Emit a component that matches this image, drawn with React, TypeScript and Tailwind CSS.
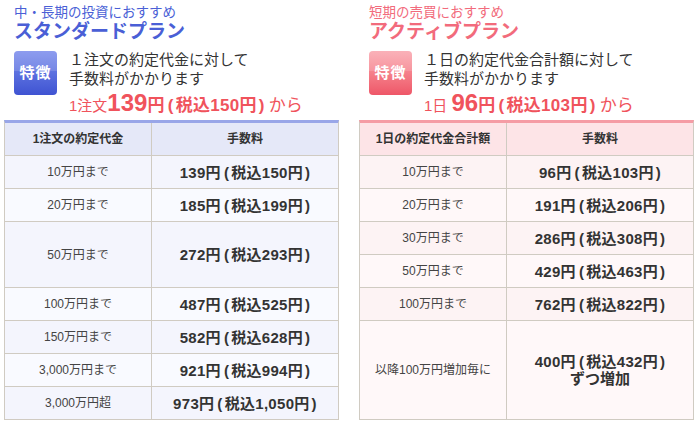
import React from "react";

const FONT = "font-['Liberation_Sans','Noto_Sans_CJK_JP',sans-serif]";

function Fee({ a, b }: { a: string; b: string }) {
  return (
    <span className="tracking-[0.3px] whitespace-nowrap">
      {a}円<span className="ml-[3px] mr-[2px]">(</span>税込{b}円<span className="ml-[2px]">)</span>
    </span>
  );
}

type Row = { label: string; fee: React.ReactNode; span?: number };

function FeeTable({
  head,
  rows,
  theme,
}: {
  head: string;
  rows: Row[];
  theme: "blue" | "pink";
}) {
  const blue = theme === "blue";
  return (
    <div
      className={`border-x border-b border-[#d0cbc2] border-t-[3px] ${
        blue ? "border-t-[#99a6e8]" : "border-t-[#f59ca5]"
      } text-[#333]`}
    >
      <div
        className={`grid grid-cols-[147px_1fr] h-[32px] ${
          blue ? "bg-[#e5e8f8]" : "bg-[#fde4e7]"
        }`}
      >
        <div className="border-r border-[#d0cbc2] flex items-center justify-center text-[12px] font-bold">
          {head}
        </div>
        <div className="flex items-center justify-center text-[12px] font-bold">
          手数料
        </div>
      </div>
      {rows.map((r, i) => {
        const h = r.span === 3 ? "h-[99px]" : r.span === 2 ? "h-[66px]" : "h-[33px]";
        const bg = blue
          ? i % 2 === 0
            ? "bg-[#f4f5fd]"
            : "bg-[#f9faff]"
          : i % 2 === 0
          ? "bg-[#fdf3f4]"
          : "bg-[#fff8f9]";
        return (
          <div
            key={i}
            className={`grid grid-cols-[147px_1fr] border-t border-[#d0cbc2] ${h} ${bg}`}
          >
            <div className="border-r border-[#d0cbc2] flex items-center justify-center text-[12px] text-[#444]">
              {r.label}
            </div>
            <div className="flex flex-col items-center justify-center text-[15px] font-bold leading-[17px] text-center">
              {r.fee}
            </div>
          </div>
        );
      })}
    </div>
  );
}

function Badge({ theme }: { theme: "blue" | "pink" }) {
  const blue = theme === "blue";
  return (
    <div
      className={`relative w-[43px] h-[44px] rounded-[4px] overflow-hidden shrink-0 flex items-center justify-center ${
        blue
          ? "bg-gradient-to-b from-[#7a8bec] to-[#3f53d2]"
          : "bg-gradient-to-b from-[#f9a4ad] to-[#ee5668]"
      }`}
    >
      <div className="absolute inset-x-0 top-0 h-[20px] bg-white/15" />
      <span className="relative text-white font-bold text-[15px] tracking-[1px]">
        特徴
      </span>
    </div>
  );
}

function Plan({
  theme,
  sub,
  title,
  desc1,
  desc2,
  unit,
  price,
  rest,
  head,
  rows,
}: {
  theme: "blue" | "pink";
  sub: string;
  title: string;
  desc1: string;
  desc2: string;
  unit: string;
  price: string;
  rest: string;
  head: string;
  rows: Row[];
}) {
  const blue = theme === "blue";
  const titleColor = blue ? "text-[#4a5fd6]" : "text-[#f26b7c]";
  return (
    <div className="w-[335px] flex flex-col">
      <div className="pl-[10px] h-[120px] overflow-hidden">
        <div className={`text-[13.5px] leading-[16px] pt-[5px] ${titleColor}`}>{sub}</div>
        <div className={`text-[19px] leading-[22px] font-bold ${titleColor}`}>{title}</div>
        <div className="flex gap-[12px] mt-[8px]">
          <Badge theme={theme} />
          <div className="text-[15px] leading-[19px] text-[#333] -mt-[1px]">
            <div>{desc1}</div>
            <div>{desc2}</div>
            <div className="text-[#f0535c] leading-[24px] mt-[3px] whitespace-nowrap">
              <span className="text-[15px]">{unit}</span>
              <span className="text-[24px] font-bold">{price}</span>
              <span className="text-[17px] font-bold tracking-[0.3px]">
                円<span className="ml-[3px] mr-[2px]">(</span>税込{rest}円<span className="ml-[2px] mr-[4px]">)</span>
              </span>
              <span className="text-[17px]">から</span>
            </div>
          </div>
        </div>
      </div>
      <FeeTable head={head} rows={rows} theme={theme} />
    </div>
  );
}

export default function App() {
  const leftRows: Row[] = [
    { label: "10万円まで", fee: <Fee a="139" b="150" /> },
    { label: "20万円まで", fee: <Fee a="185" b="199" /> },
    { label: "50万円まで", fee: <Fee a="272" b="293" />, span: 2 },
    { label: "100万円まで", fee: <Fee a="487" b="525" /> },
    { label: "150万円まで", fee: <Fee a="582" b="628" /> },
    { label: "3,000万円まで", fee: <Fee a="921" b="994" /> },
    { label: "3,000万円超", fee: <Fee a="973" b="1,050" /> },
  ];
  const rightRows: Row[] = [
    { label: "10万円まで", fee: <Fee a="96" b="103" /> },
    { label: "20万円まで", fee: <Fee a="191" b="206" /> },
    { label: "30万円まで", fee: <Fee a="286" b="308" /> },
    { label: "50万円まで", fee: <Fee a="429" b="463" /> },
    { label: "100万円まで", fee: <Fee a="762" b="822" /> },
    {
      label: "以降100万円増加毎に",
      fee: (
        <>
          <Fee a="400" b="432" />
          <span>ずつ増加</span>
        </>
      ),
      span: 3,
    },
  ];
  return (
    <div className={`w-[698px] h-[424px] bg-white flex pl-[4px] gap-[20px] ${FONT}`}>
      <Plan
        theme="blue"
        sub="中・長期の投資におすすめ"
        title="スタンダードプラン"
        desc1="１注文の約定代金に対して"
        desc2="手数料がかかります"
        unit="1注文"
        price="139"
        rest="150"
        head="1注文の約定代金"
        rows={leftRows}
      />
      <Plan
        theme="pink"
        sub="短期の売買におすすめ"
        title="アクティブプラン"
        desc1="１日の約定代金合計額に対して"
        desc2="手数料がかかります"
        unit="1日 "
        price="96"
        rest="103"
        head="1日の約定代金合計額"
        rows={rightRows}
      />
    </div>
  );
}
